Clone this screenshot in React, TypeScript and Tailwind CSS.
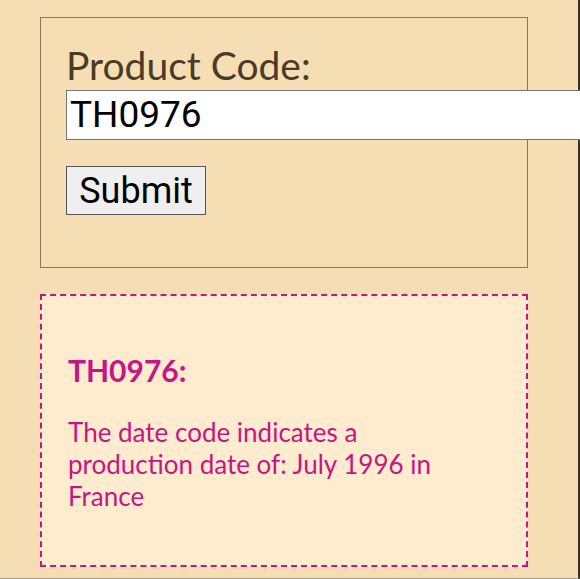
import React from "react";

export default function App() {
  return (
    <div className="w-[580px] h-[579px] overflow-hidden">
      <div className="w-[580px] h-[579px] bg-[#f5deb3] border-r-2 border-dashed border-r-[#3a3326] border-b border-b-[#a39a8a] border-solid pl-[40px] pt-[17px] box-border">
        <div className="w-[488px] h-[251px] border border-[#8b7657] pl-[25px] pt-[25px] box-border">
          <label
            className="block text-[39px] leading-[45px] mb-[2px] text-[#4b3a26]"
            style={{ fontFamily: "Lato, 'Noto Sans', sans-serif" }}
          >
            Product Code:
          </label>
          <input
            defaultValue="TH0976"
            className="block w-[540px] h-[50px] bg-white border border-[#767676] px-[3px] text-[37px] text-black outline-none"
            style={{ fontFamily: "Roboto, sans-serif" }}
          />
          <button
            className="block mt-[26px] w-[140px] h-[49px] bg-[#efefef] border border-[#555] text-[36px] text-black leading-none"
            style={{ fontFamily: "Roboto, sans-serif" }}
          >
            Submit
          </button>
        </div>
        <div
          className="mt-[26px] w-[488px] h-[273px] border-2 border-dashed border-[#c71585] bg-[#ffebcd] pl-[26px] pt-[56px] box-border text-[#c71585]"
          style={{ fontFamily: "Lato, 'Noto Sans', sans-serif" }}
        >
          <div className="text-[30px] font-bold leading-[36px]">TH0976:</div>
          <p className="mt-[28px] text-[26px] leading-[32px] w-[400px]">
            The date code indicates a production date of: July 1996 in France
          </p>
        </div>
      </div>
    </div>
  );
}
